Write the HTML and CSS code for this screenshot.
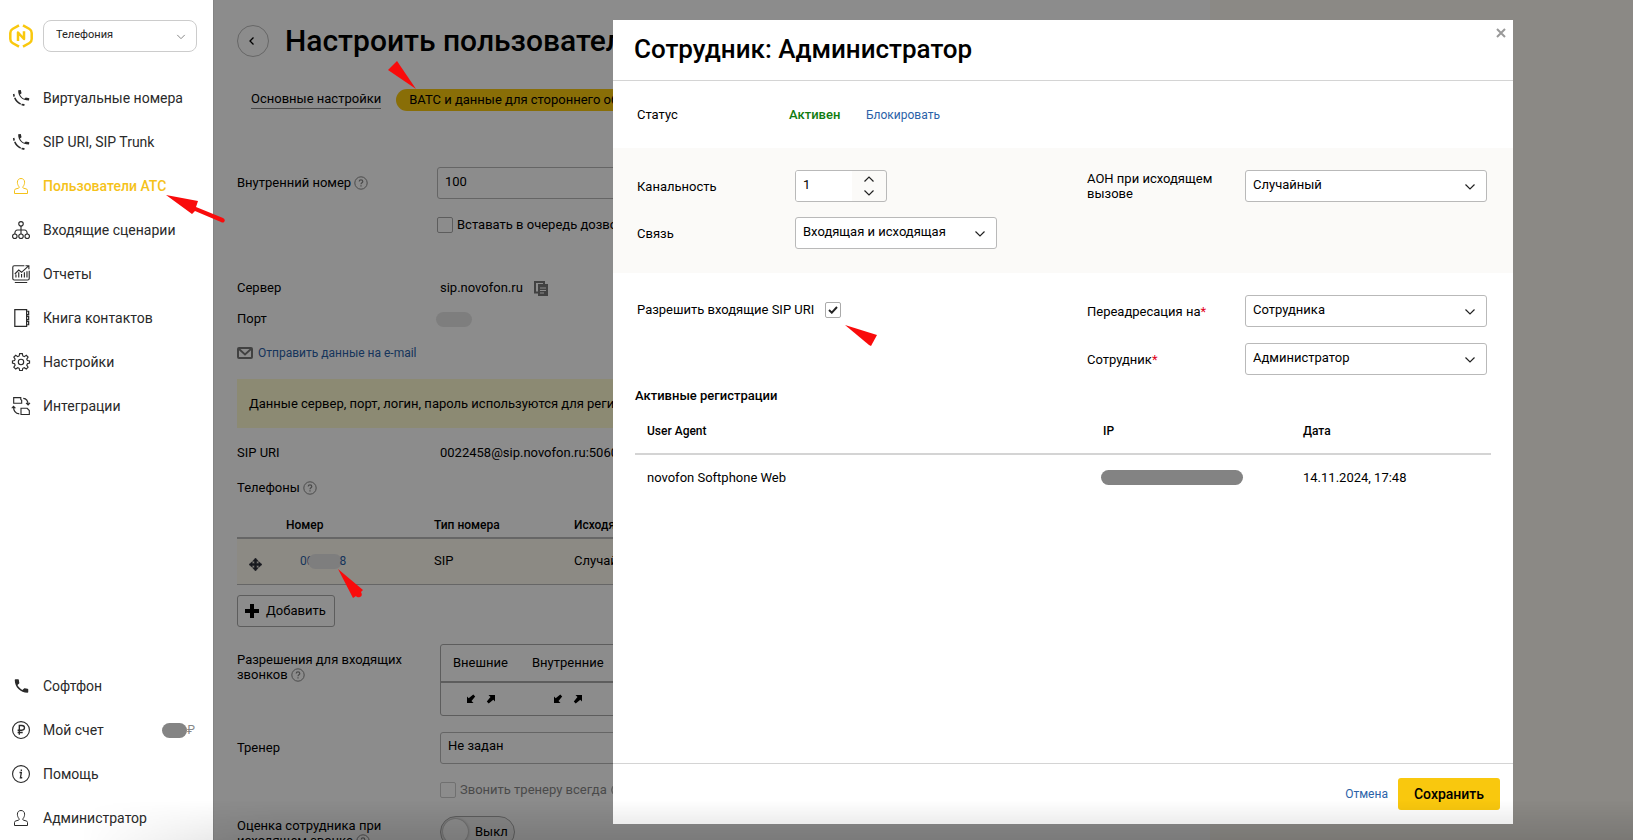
FILE: index.html
```html
<!DOCTYPE html>
<html lang="ru">
<head>
<meta charset="utf-8">
<title>Настроить пользователя</title>
<link rel="stylesheet" href="styles.css">
</head>
<body>
<svg class="defs" aria-hidden="true">
  <defs>
    <symbol id="chevron" viewBox="0 0 12 8"><path d="M1.500 1.500 6 6l4.500-4.500" fill="none" stroke="currentColor" stroke-width="1.200"/></symbol>
    <symbol id="help" viewBox="0 0 14 14"><circle cx="7" cy="7" r="6.200" fill="none" stroke="currentColor"/><path d="M5.200 5.600c0-2.300 3.600-2.200 3.600-.1C8.800 6.800 7 6.800 7 8.300M7 9.300v1.200" fill="none" stroke="currentColor" stroke-width="1.200"/></symbol>
    <symbol id="handset" viewBox="0 0 24 24"><path d="M6.600 10.800c1.400 2.800 3.800 5.100 6.600 6.600l2.200-2.200c.3-.3.700-.4 1-.2 1.100.4 2.300.6 3.600.6.600 0 1 .4 1 1V20c0 .6-.4 1-1 1C10.600 21 3 13.400 3 4c0-.6.4-1 1-1h3.500c.6 0 1 .4 1 1 0 1.200.2 2.400.6 3.600.1.300 0 .700-.2 1z" fill="currentColor"/></symbol>
    <symbol id="calls" viewBox="0 0 16 16"><path d="M5.500 1.200 7.800.8l.7 3-1.400 1C8 6.800 9.300 8 11 8.700l1.300-1.200 3.100.8-.3 2C9.500 10.400 5.200 7 5.500 1.200z" fill="currentColor"/><path d="M.8 4.700l1.300-.5.5 2.300-1.300.6zM1.800 8l1.200-.5C4 9.800 5.800 11.700 8 12.800l-.5 1.300C4.800 12.800 2.800 10.700 1.800 8zM8.600 13l2.600.4-.3 1.700-2.600-.6z" fill="currentColor"/></symbol>
    <symbol id="person" viewBox="0 0 16 18"><path d="M1.500 16.500v-3c0-.9.500-1.400 1.400-1.600l2.600-.7c.7-.2.9-.8.5-1.500C4.900 8.300 4.400 6.800 4.400 5.200 4.400 2.900 5.900 1.500 8 1.500s3.600 1.400 3.600 3.700c0 1.600-.5 3.100-1.600 4.500-.4.700-.2 1.300.5 1.500l2.600.7c.9.2 1.400.7 1.400 1.600v3z" fill="none" stroke="currentColor"/></symbol>
    <symbol id="arrow-in" viewBox="0 0 10 10"><path d="M1 2.500 2.700 4.200 7.300.5 9.200 2.400 5.500 7l2 2H1z" fill="currentColor"/></symbol>
    <symbol id="arrow-out" viewBox="0 0 10 10"><path d="M9 7.500 7.300 5.800 2.700 9.500.8 7.600l3.700-4.600-2-2H9z" fill="currentColor"/></symbol>
  </defs>
</svg>

<div class="app">
  <aside class="sidebar">
    <div class="brand">
      <svg class="logo" viewBox="0 0 24 24" fill="none" stroke="#f9c80e" stroke-width="2.500" stroke-linejoin="round"><path d="M10 1.300 3.500 5Q1.300 6.300 1.300 9v6q0 2.700 2.200 4L10 22.700M14 1.300 20.500 5q2.200 1.300 2.200 4v6q0 2.700-2.200 4L14 22.700M9 17V8.500l6 6.500V7.300"/></svg>
      <div class="picker product">
        <select aria-label="Продукт"><option>Телефония</option></select>
        <svg class="caret"><use href="#chevron"/></svg>
      </div>
    </div>
    <nav class="menu">
      <a href="#"><svg class="ico"><use href="#calls"/></svg>Виртуальные номера</a>
      <a href="#"><svg class="ico"><use href="#calls"/></svg>SIP URI, SIP Trunk</a>
      <a href="#" class="current"><svg class="ico"><use href="#person"/></svg>Пользователи АТС</a>
      <a href="#"><svg class="ico" viewBox="0 0 16 16" fill="none" stroke="currentColor"><circle cx="8" cy="2.500" r="2"/><circle cx="2.500" cy="13.500" r="2"/><circle cx="8" cy="13.500" r="2"/><circle cx="13.500" cy="13.500" r="2"/><path d="M8 4.500v7M2.500 11.500c0-2 .5-3.500 2.500-3.500h6c2 0 2.500 1.500 2.500 3.500"/></svg>Входящие сценарии</a>
      <a href="#"><svg class="ico" viewBox="0 0 16 16" fill="none" stroke="currentColor"><path d="M11 .7H2Q.7.7.7 2v10q0 1.300 1.300 1.300h12q1.300 0 1.300-1.300V5M2.500 15.500h11M3.500 11V8.500M6 11V6.500M8.500 11V8M11 11V6.500M13.300 11V5.500M2.500 8 6 4.500l2.500 2L14.500 1M12 .7h3v3"/></svg>Отчеты</a>
      <a href="#"><svg class="ico" viewBox="0 0 16 16" fill="none" stroke="currentColor" stroke-width="1.100"><path d="M2.500.6H13v14.800H2.500zM13 2h1.800v3H13M13 6.500h1.800v3H13M13 11h1.800v3H13"/></svg>Книга контактов</a>
      <a href="#"><svg class="ico" viewBox="0 0 16 16" fill="none" stroke="currentColor"><circle cx="8" cy="8" r="2.400"/><path d="M6.800.6h2.400l.4 2 1.300.6 1.800-1.200 1.600 1.600-1.200 1.800.6 1.300 1.900.4v1.900l-1.900.5-.6 1.300 1.200 1.800-1.600 1.700-1.800-1.200-1.300.5-.4 1.900H6.800l-.4-1.900-1.300-.5-1.800 1.200-1.700-1.700 1.200-1.800-.5-1.300-1.900-.5V7.100l1.900-.4.5-1.300L1.600 3.600 3.300 2l1.800 1.200 1.300-.6z"/></svg>Настройки</a>
      <a href="#"><svg class="ico" viewBox="0 0 16 16" fill="none" stroke="currentColor"><path d="M1.500.6h6.300v1.600l.8.7v2.600H1.500zM8 10h5.500l1.900 2v3.500H8zM10 1.200c2.800.2 4.300 1.500 4.300 5.800M12.500 5.300 14.300 7 16 5.300M6.500 15C3 14.800 1.300 12.500 1.300 8.300M-.2 10l1.500-1.700L3 10"/></svg>Интеграции</a>
    </nav>
    <nav class="menu menu-bottom">
      <a href="#"><svg class="ico handset"><use href="#handset"/></svg>Софтфон</a>
      <a href="#"><svg class="ico" viewBox="0 0 16 16" fill="none" stroke="currentColor"><circle cx="8" cy="8" r="7.500"/><path d="M6.500 12.300V4h2.200c3.200 0 3.200 4.200 0 4.200H5M5 10.200h4.500" stroke-width="1.200"/></svg>Мой счет<span class="balance"><i></i>₽</span></a>
      <a href="#"><svg class="ico" viewBox="0 0 16 16" fill="none" stroke="currentColor"><circle cx="8" cy="8" r="7.500"/><path d="M6.700 6.700h1.600L7.500 11.300h1.600M8.300 3.900v1.400" stroke-width="1.200"/></svg>Помощь</a>
      <a href="#"><svg class="ico"><use href="#person"/></svg>Администратор</a>
    </nav>
  </aside>

  <div class="stage">
    <main class="page">
      <header class="page-head">
        <button class="back" type="button" aria-label="Назад"><svg viewBox="0 0 8 12"><path d="M5.500 2.500 2 6l3.500 3.500" fill="none" stroke="currentColor" stroke-width="1.300"/></svg></button>
        <h1>Настроить пользователя</h1>
      </header>
      <div class="tabs">
        <a href="#" class="tab"><span>Основные настройки</span></a>
        <a href="#" class="tab tab-on">ВАТС и данные для стороннего оборудования</a>
      </div>

      <div class="line ext">
        <label for="ext">Внутренний номер <svg class="help"><use href="#help"/></svg></label>
        <input class="box" id="ext" type="text" value="100">
      </div>
      <div class="line queue"><span></span><label class="tick"><input type="checkbox">Вставать в очередь дозвона</label></div>

      <div class="line wide server"><span>Сервер</span><span class="copy">sip.novofon.ru <svg viewBox="0 0 14 15"><path d="M4 11.500H1V1h9v2" fill="none" stroke="#777" stroke-width="2"/><path d="M4 3h10v12H4z" fill="#777"/><path d="M6 7h6M6 9.500h6M6 12h4" stroke="#fff"/></svg></span></div>
      <div class="line wide port"><span>Порт</span><i class="smudge"></i></div>
      <a href="#" class="mail"><svg viewBox="0 0 16 12"><rect x="1" y="1" width="14" height="10" rx="1" fill="none" stroke="#777" stroke-width="2"/><path d="m2 2 6 5.500L14 2" fill="none" stroke="#777" stroke-width="1.800"/></svg>Отправить данные на e-mail</a>
      <p class="notice">Данные сервер, порт, логин, пароль используются для регистрации</p>
      <div class="line wide uri"><span>SIP URI</span><span>0022458@sip.novofon.ru:5060</span></div>

      <div class="phones-title">Телефоны <svg class="help"><use href="#help"/></svg></div>
      <table class="phones">
        <colgroup><col class="c-num"><col class="c-type"><col></colgroup>
        <thead><tr><th>Номер</th><th>Тип номера</th><th>Исходящий номер</th></tr></thead>
        <tbody><tr>
          <td><div class="num"><svg class="move" viewBox="0 0 14 14"><path d="M7 0l3 3.500H8.200v2.300h2.300V4L14 7l-3.500 3V8.200H8.200v2.300H10L7 14l-3-3.500h1.800V8.200H3.500V10L0 7l3.500-3v1.800h2.300V3.500H4z" fill="#2b2e38" stroke="#2b2e38" stroke-width=".6"/></svg><a href="#">00<i class="smudge"></i>8</a></div></td>
          <td>SIP</td><td>Случайный</td>
        </tr></tbody>
      </table>
      <button class="add" type="button"><svg viewBox="0 0 14 14"><path d="M7 0v14M0 7h14" stroke="#000" stroke-width="4"/></svg>Добавить</button>

      <div class="line wide perms">
        <span class="wrap">Разрешения для входящих звонков <svg class="help"><use href="#help"/></svg></span>
        <table class="grants">
          <colgroup><col class="g1"><col class="g2"><col></colgroup>
          <thead><tr><th>Внешние</th><th>Внутренние</th><th></th></tr></thead>
          <tbody><tr>
            <td><span><svg><use href="#arrow-in"/></svg><svg><use href="#arrow-out"/></svg></span></td>
            <td><span><svg><use href="#arrow-in"/></svg><svg><use href="#arrow-out"/></svg></span></td>
            <td></td>
          </tr></tbody>
        </table>
      </div>
      <div class="line wide trainer">
        <label for="trainer">Тренер</label>
        <div class="picker"><select id="trainer"><option>Не задан</option></select><svg class="caret"><use href="#chevron"/></svg></div>
      </div>
      <div class="line wide queue off"><span></span><label class="tick"><input type="checkbox" disabled>Звонить тренеру всегда <svg class="help"><use href="#help"/></svg></label></div>
      <div class="line wide rating">
        <span class="wrap">Оценка сотрудника при исходящем звонке <svg class="help"><use href="#help"/></svg></span>
        <button class="switch" type="button" role="switch" aria-checked="false"><i></i>Выкл</button>
      </div>
    </main>
  </div>
</div>

<div class="overlay">
  <section class="modal" role="dialog" aria-labelledby="dlg">
    <header class="modal-head">
      <h2 id="dlg">Сотрудник: Администратор</h2>
      <button class="close" type="button" aria-label="Закрыть"><svg viewBox="0 0 10 10"><path d="m1 1 8 8M9 1 1 9" stroke="#999" stroke-width="2"/></svg></button>
    </header>
    <div class="status"><span>Статус</span><b>Активен</b><a href="#">Блокировать</a></div>

    <div class="band pair">
      <div class="fields">
        <label for="channels">Канальность</label>
        <div class="spin">
          <input id="channels" type="text" value="1">
          <div class="steps">
            <button type="button" aria-label="Больше"><svg class="up"><use href="#chevron"/></svg></button>
            <button type="button" aria-label="Меньше"><svg><use href="#chevron"/></svg></button>
          </div>
        </div>
        <label for="link">Связь</label>
        <div class="picker link"><select id="link"><option>Входящая и исходящая</option></select><svg class="caret"><use href="#chevron"/></svg></div>
      </div>
      <div class="fields">
        <label for="aon">АОН при исходящем вызове</label>
        <div class="picker"><select id="aon"><option>Случайный</option></select><svg class="caret"><use href="#chevron"/></svg></div>
      </div>
    </div>

    <div class="modal-body">
      <div class="pair">
        <label class="allow">Разрешить входящие SIP URI
          <span class="check"><input type="checkbox" checked><svg viewBox="0 0 10 8"><path d="m1 4 2.800 2.700L9 1" fill="none" stroke="#222" stroke-width="1.900"/></svg></span>
        </label>
        <div class="fields spaced">
          <label for="fwd">Переадресация на<em>*</em></label>
          <div class="picker"><select id="fwd"><option>Сотрудника</option></select><svg class="caret"><use href="#chevron"/></svg></div>
          <label for="emp">Сотрудник<em>*</em></label>
          <div class="picker"><select id="emp"><option>Администратор</option></select><svg class="caret"><use href="#chevron"/></svg></div>
        </div>
      </div>
      <h3>Активные регистрации</h3>
      <table class="regs">
        <colgroup><col><col class="r-ip"><col class="r-date"></colgroup>
        <thead><tr><th>User Agent</th><th>IP</th><th>Дата</th></tr></thead>
        <tbody><tr><td>novofon Softphone Web</td><td><i class="mask"></i></td><td>14.11.2024, 17:48</td></tr></tbody>
      </table>
    </div>

    <footer class="modal-foot">
      <a href="#">Отмена</a>
      <button type="button">Сохранить</button>
    </footer>
  </section>
</div>

<div class="floor"></div>
<svg class="pointers" fill="#f90b0b" aria-hidden="true">
  <path d="M166 195l32 6-2 6 27 11q3 2 1 4-1 1-3 0l-26-11-3 3z"/>
  <path d="M416 89 397 61l-9 9z"/>
  <path d="M338 569l25 21-2 2q2 4-1 5-3 1-4-1l-3 2z"/>
  <path d="M845 325l32 10-6 11-2-1z"/>
</svg>
</body>
</html>
```
FILE: styles.css
```css
*, *::before, *::after { box-sizing: border-box; }
body {
  margin: 0;
  height: 100vh;
  overflow: hidden;
  font: 13px/16px Roboto, "Open Sans", sans-serif;
  color: #000;
}
button, input, select { font: inherit; color: inherit; }
a { color: #2b62a8; text-decoration: none; }
h1, h2, h3, p { margin: 0; }
em { font-style: normal; color: #e2001a; }
.defs { position: absolute; width: 0; height: 0; }
.app { display: flex; height: 100vh; }

/* sidebar */
.sidebar {
  flex: 0 0 213px;
  display: flex;
  flex-direction: column;
  background: #fff;
}
.brand { display: flex; align-items: center; gap: 10px; padding: 20px 16px 0 9px; }
.logo { width: 24px; height: 24px; }
.picker { position: relative; }
.picker select {
  appearance: none;
  display: block;
  width: 100%;
  height: 32px;
  padding: 0 30px 3px 7px;
  border: 1px solid #b9b9b9;
  border-radius: 3px;
  background: #fff;
}
.caret {
  position: absolute;
  right: 11px;
  top: 13px;
  width: 12px;
  height: 8px;
  color: #222;
  pointer-events: none;
}
.product { flex: 1; }
.product select { border-color: #ccc; border-radius: 8px; font-size: 11px; padding-left: 12px; padding-bottom: 2px; color: #222; }
.product .caret { width: 10px; color: #888; }
.menu { display: flex; flex-direction: column; padding: 24px 18px 0 12px; }
.menu a {
  display: flex;
  align-items: center;
  gap: 13px;
  height: 44px;
  font-size: 14px;
  color: #2a2a2a;
}
.menu .current { color: #f5c21a; font-weight: 500; }
.ico { width: 18px; height: 18px; flex: none; overflow: visible; }
.menu-bottom { margin-top: auto; padding-top: 0; }
.ico.handset { width: 19px; margin-right: -1px; }
.balance { display: flex; align-items: center; margin-left: auto; font-size: 12px; color: #888; }
.balance i { width: 25px; height: 15px; border-radius: 8px; background: #848484; }

/* page under the dialog */
.stage { flex: 1; min-width: 0; background: #fdf9f3; }
.page {
  width: 70.2%;
  height: 100%;
  padding: 25px 24px 0 23px;
  background: #fff;
  border-left: 1px solid #eee;
  overflow: hidden;
}
.page-head { display: flex; align-items: center; gap: 16px; height: 32px; }
.page-head h1 { font-size: 30px; line-height: 32px; font-weight: 500; white-space: nowrap; }
.back {
  display: flex;
  align-items: center;
  justify-content: center;
  width: 32px;
  height: 32px;
  border: 1px solid #bbb;
  border-radius: 50%;
  background: none;
  padding: 0 2px 0 0;
}
.back svg { width: 8px; height: 12px; }
.tabs { display: flex; gap: 15px; margin-top: 32px; padding-left: 14px; white-space: nowrap; }
.tab { height: 22px; color: #000; }
.tab span { display: block; line-height: 20px; border-bottom: 1px solid #888; height: 20px; }
.tab-on { padding: 0 13px; border-radius: 11px; background: #f9c80e; line-height: 21px; }
.line { display: grid; grid-template-columns: 200px 1fr; align-items: center; }
.line.wide { grid-template-columns: 203px 1fr; }
.help { width: 14px; height: 14px; vertical-align: -3px; color: #888; }
.box {
  height: 32px;
  width: 100%;
  padding: 0 7px 3px;
  border: 1px solid #b9b9b9;
  border-radius: 3px;
  font-size: 13px;
}
.ext { margin-top: 56px; }
.queue { margin-top: 18px; }
.tick { display: flex; align-items: center; gap: 4px; height: 16px; }
input[type="checkbox"] {
  appearance: none;
  width: 16px;
  height: 16px;
  margin: 0;
  border: 1px solid #aaa;
  border-radius: 2px;
  background: #fff;
}
.off { color: #888; }
.off input[type="checkbox"] { border-color: #ccc; }
.server { margin-top: 47px; }
.copy { display: flex; align-items: center; gap: 11px; }
.copy svg { width: 14px; height: 15px; }
.port { margin-top: 15px; height: 16px; }
.port .smudge { margin-left: -4px; }
.smudge { display: block; width: 36px; height: 15px; border-radius: 8px; background: #e6e6e6; }
.mail { display: flex; align-items: center; gap: 5px; height: 16px; margin-top: 18px; font-size: 12px; }
.mail svg { width: 16px; height: 12px; }
.notice { margin-top: 18px; padding: 17px 12px 16px; background: #fffbd2; white-space: nowrap; }
.uri { margin-top: 17px; }
.phones-title { margin-top: 19px; }
table { border-collapse: collapse; table-layout: fixed; width: 100%; }
th, td { text-align: left; padding: 0; font-weight: 400; }
th { font-weight: 500; font-size: 12px; }
.phones { margin-top: 2px; }
.c-num { width: 197px; }
.c-type { width: 140px; }
.phones th { height: 40px; padding-top: 14px; border-bottom: 2px solid #bbb; background: #fff; }
.phones th:first-child { padding-left: 49px; }
.phones td { height: 46px; background: #fffbf0; border-bottom: 1px solid #bbb; }
.num { display: flex; align-items: center; gap: 38px; padding-left: 12px; }
.num a { display: flex; align-items: center; font-size: 12px; }
.num .smudge { width: 34px; margin: 0 -2px 0 -6px; }
.move { width: 13px; height: 13px; margin-top: 6px; }
.add {
  display: flex;
  align-items: center;
  gap: 7px;
  height: 32px;
  margin-top: 10px;
  padding: 0 8px 0 7px;
  border: 1px solid #aaa;
  border-radius: 3px;
  background: #fff;
}
.add svg { width: 14px; height: 14px; }
.perms { margin-top: 17px; align-items: start; }
.wrap { line-height: 15px; padding: 8px 30px 0 0; }
.grants { border: 1px solid #aaa; border-collapse: separate; border-spacing: 0; border-radius: 3px; height: 72px; }
.grants th { font-size: 13px; font-weight: 400; height: 38px; border-bottom: 2px solid #aaa; padding-left: 12px; }
.grants td { padding-left: 25px; }
.grants td + td { padding-left: 33px; }
.grants span { display: flex; gap: 10px; }
.grants svg { width: 10px; height: 10px; }
.g1 { width: 79px; }
.g2 { width: 90px; }
.trainer { margin-top: 16px; }
.rating { margin-top: 18px; align-items: start; }
.rating .wrap { padding-top: 2px; }
.switch {
  display: flex;
  align-items: center;
  gap: 7px;
  width: 75px;
  height: 32px;
  padding: 0 2px;
  border: 1px solid #aaa;
  border-radius: 16px;
  background: #f4f4f4;
}
.switch i { width: 25px; height: 25px; border-radius: 50%; background: #fff; box-shadow: 0 0 3px #888; }

/* dialog */
.overlay {
  position: fixed;
  inset: 0 0 0 213px;
  display: flex;
  justify-content: flex-end;
  padding: 20px 120px 16px;
  background: rgba(0, 0, 0, .45);
}
.modal { display: flex; flex-direction: column; width: 900px; background: #fff; }
.modal-head {
  display: flex;
  justify-content: space-between;
  align-items: flex-start;
  padding: 13px 7px 15px 21px;
  border-bottom: 1px solid #d4d4d4;
}
.modal-head h2 { font-size: 26px; line-height: 32px; font-weight: 500; }
.close { display: flex; border: 0; background: none; padding: 0; margin-top: -5px; }
.close svg { width: 10px; height: 10px; }
.status { display: flex; align-items: center; height: 67px; padding-left: 24px; }
.status span { width: 152px; }
.status b { width: 77px; font-weight: 500; color: #107c10; }
.status a { font-size: 12px; }
.pair { display: grid; grid-template-columns: 450px 1fr; padding: 0 26px 0 24px; align-items: start; }
.band { background: #fbfaf8; padding-top: 22px; padding-bottom: 24px; }
.fields { display: grid; grid-template-columns: 158px 1fr; row-gap: 15px; align-items: center; line-height: 15px; }
.spaced { row-gap: 16px; }
.link { width: 202px; }
.spin { display: flex; width: 92px; height: 32px; border: 1px solid #b9b9b9; border-radius: 3px; overflow: hidden; }
.spin input { flex: 1; min-width: 0; border: 0; padding: 0 7px 3px; background: #fff; }
.steps { display: flex; flex-direction: column; width: 34px; padding: 1px 0; }
.steps button { flex: 1; display: flex; align-items: center; justify-content: center; border: 0; padding: 0; background: none; color: #222; }
.steps svg { width: 12px; height: 8px; }
.steps .up { transform: rotate(180deg); }
.modal-body { flex: 1; padding-top: 22px; }
.allow { display: flex; align-items: center; gap: 11px; padding-top: 7px; }
.check { position: relative; display: block; height: 16px; }
.check input { display: block; }
.check svg { position: absolute; left: 3px; top: 4px; width: 10px; height: 8px; }
.modal-body h3 { margin: 13px 22px 0; font-size: 13px; font-weight: 500; }
.regs { width: auto; min-width: calc(100% - 44px); margin: 0 22px; }
.regs th { height: 50px; padding: 4px 12px 0; border-bottom: 2px solid #d4d4d4; }
.regs td { height: 46px; padding: 0 12px; }
.r-ip { width: 200px; }
.r-date { width: 200px; }
.mask { display: block; width: 142px; height: 15px; margin-left: -2px; border-radius: 8px; background: #838383; }
.modal-foot {
  display: flex;
  align-items: center;
  justify-content: flex-end;
  gap: 10px;
  padding: 14px 13px;
  border-top: 1px solid #d4d4d4;
}
.modal-foot a { font-size: 12px; }
.modal-foot button {
  height: 32px;
  padding: 0 16px;
  border: 0;
  border-radius: 3px;
  background: #f9c80e;
  font-size: 14px;
  font-weight: 500;
}

.floor {
  position: fixed;
  inset: auto 0 0 80px;
  height: 40px;
  background: linear-gradient(transparent, rgba(0, 0, 0, .12));
  mask-image: linear-gradient(90deg, transparent, #000 200px);
  pointer-events: none;
}
.pointers { position: fixed; inset: 0; width: 100%; height: 100%; pointer-events: none; }
```
